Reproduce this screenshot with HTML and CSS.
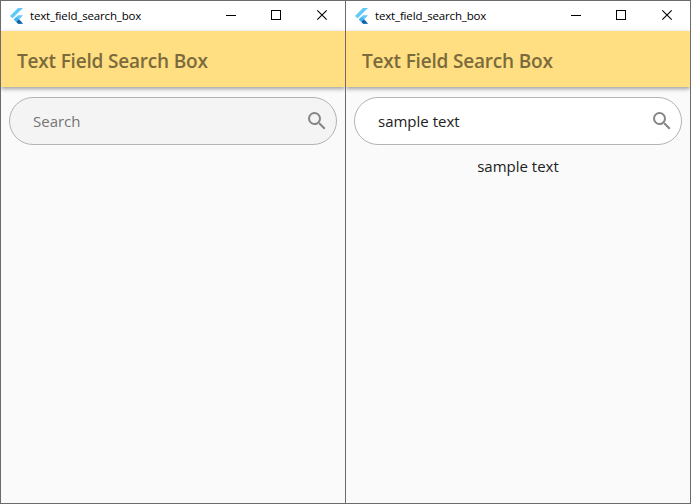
FILE: index.html
```
<!DOCTYPE html>
<html lang="en">
<head>
<meta charset="utf-8">
<title>text_field_search_box</title>
<link rel="stylesheet" href="styles.css">
</head>
<body>
<svg width="0" height="0" class="defs" aria-hidden="true">
  <symbol id="flutter" viewBox="0 0 13 16">
    <path d="M8 0h5L2.500 10.200 0 7.900z" fill="#5fc9f8"/>
    <path d="M8 7.300h5L9.200 11.300 13 15.800H8L3.800 11.400z" fill="#5fc9f8"/>
    <path d="M6.300 13.800l2.600-2.500L13 15.800H8z" fill="#135f9f"/>
    <path d="M3.800 11.400l2.500-2.500 2.500 2.500-2.500 2.400z" fill="#42b4ec"/>
  </symbol>
  <symbol id="search" viewBox="0 0 24 24">
    <path d="M15.500 14h-.79l-.28-.27A6.470 6.470 0 0 0 16 9.500 6.500 6.500 0 1 0 9.500 16c1.610 0 3.090-.59 4.230-1.570l.27.28v.79l5 4.990L20.490 19l-4.990-5zm-6 0C7.010 14 5 11.990 5 9.500S7.010 5 9.500 5 14 7.010 14 9.500 11.990 14 9.500 14z" fill="#868686"/>
  </symbol>
  <symbol id="controls" viewBox="0 0 138 30">
    <path d="M19 14.500h10M64.500 9.500h9v9h-9z" fill="none" stroke="#000" shape-rendering="crispEdges"/>
    <path d="M110.300 9.300l9.400 9.400M119.700 9.300l-9.400 9.400" fill="none" stroke="#000" stroke-width="1.100"/>
  </symbol>
</svg>
<div class="desktop">
  <section class="window">
    <header class="titlebar">
      <svg class="logo"><use href="#flutter"/></svg>
      <span class="caption">text_field_search_box</span>
      <svg class="controls"><use href="#controls"/></svg>
    </header>
    <main class="app">
      <h1 class="appbar"><span>Text Field Search Box</span></h1>
      <div class="field field-empty">
        <span class="hint">Search</span>
        <svg class="icon"><use href="#search"/></svg>
      </div>
    </main>
  </section>
  <section class="window">
    <header class="titlebar">
      <svg class="logo"><use href="#flutter"/></svg>
      <span class="caption">text_field_search_box</span>
      <svg class="controls"><use href="#controls"/></svg>
    </header>
    <main class="app">
      <h1 class="appbar"><span>Text Field Search Box</span></h1>
      <div class="field">
        <span class="value">sample text</span>
        <svg class="icon"><use href="#search"/></svg>
      </div>
      <p class="result">sample text</p>
    </main>
  </section>
</div>
</body>
</html>
```

FILE: styles.css
```
* { box-sizing: border-box; }
body {
  margin: 0;
  font-family: "Open Sans", "Noto Sans", sans-serif;
  color: #212121;
}
.defs { position: absolute; }
.desktop {
  display: grid;
  grid-template-columns: 344px 344px;
  gap: 1px;
  width: 691px;
  height: 504px;
  padding: 1px;
  background: #6b6b6b;
}
.window {
  display: flex;
  flex-direction: column;
  overflow: hidden;
  background: #fafafa;
}
.titlebar {
  display: flex;
  align-items: center;
  height: 30px;
  padding-left: 9px;
  background: #fff;
  color: #000;
}
.logo { width: 13px; height: 16px; }
.caption {
  margin-left: 7px;
  font-size: 11.500px;
  line-height: 16px;
  letter-spacing: -0.16px;
  white-space: nowrap;
}
.controls { width: 138px; height: 30px; margin-left: auto; }
.appbar {
  display: flex;
  align-items: center;
  height: 56px;
  margin: 0 0 10px;
  padding: 3px 16px 0;
  background: #ffdf82;
  box-shadow: 0 2px 4px rgba(0, 0, 0, .3), 0 1px 5px rgba(0, 0, 0, .1);
  color: #7b6b3c;
  font-size: 19px;
  font-weight: 600;
  letter-spacing: -0.19px;
}
.field {
  display: flex;
  align-items: center;
  justify-content: space-between;
  height: 48px;
  margin: 0 8px;
  padding: 0 7px 0 23px;
  border: 1px solid #b3b3b3;
  border-radius: 24px;
  background: #fff;
  font-size: 15px;
}
.field-empty { background: #f4f4f4; }
.hint { color: #747474; }
.icon { width: 24px; height: 24px; }
.result {
  margin: 10px 0 0;
  font-size: 15px;
  line-height: 22px;
  text-align: center;
}
```
